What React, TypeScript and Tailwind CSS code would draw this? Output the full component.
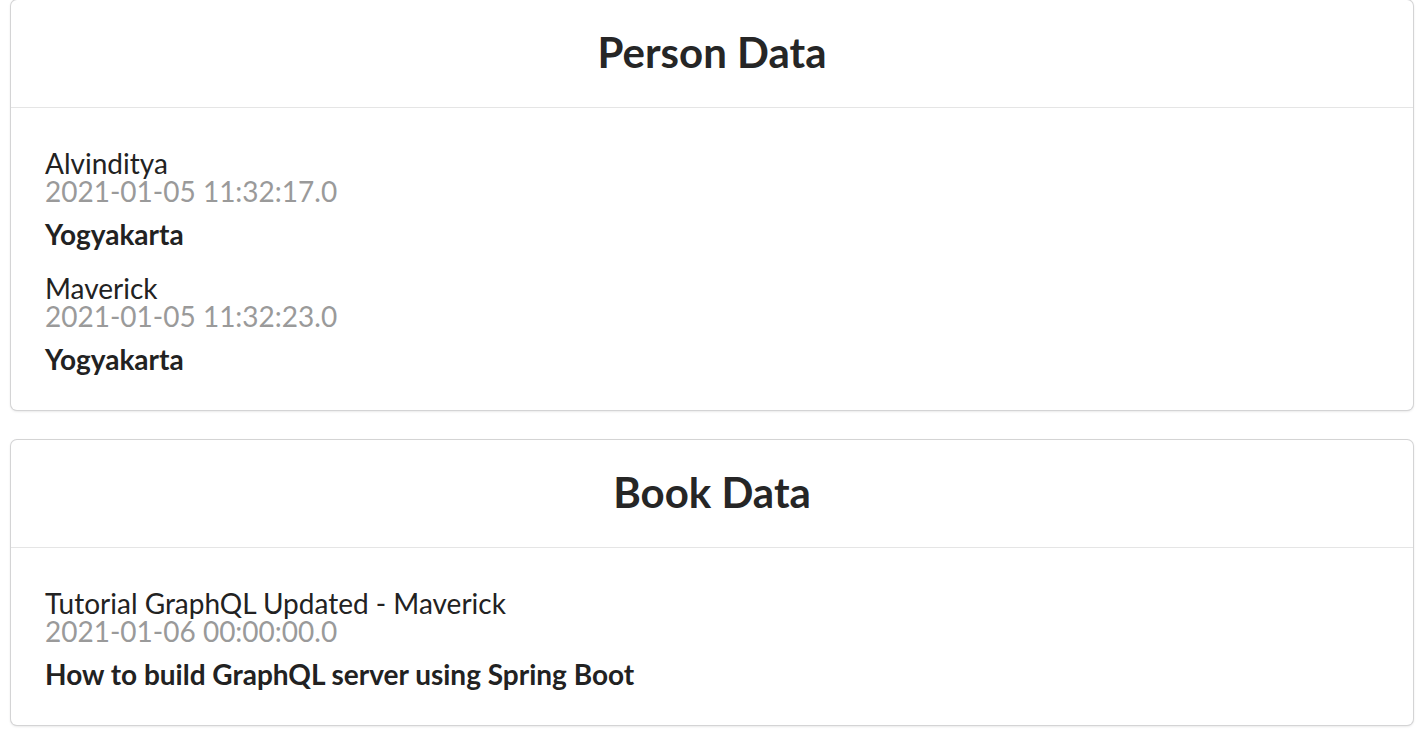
const people = [
  { name: "Alvinditya", date: "2021-01-05 11:32:17.0", city: "Yogyakarta" },
  { name: "Maverick", date: "2021-01-05 11:32:23.0", city: "Yogyakarta" },
];

const books = [
  {
    title: "Tutorial GraphQL Updated - Maverick",
    date: "2021-01-06 00:00:00.0",
    desc: "How to build GraphQL server using Spring Boot",
  },
];

function Item({ top, meta, bottom }: { top: string; meta: string; bottom: string }) {
  return (
    <div className="flex flex-col">
      <div className="text-[28px] leading-[28px] text-[#222]">{top}</div>
      <div className="text-[28px] leading-[28px] text-[#9a9a9a]">{meta}</div>
      <div className="mt-[15px] text-[28px] leading-[28px] font-bold text-[#222]">{bottom}</div>
    </div>
  );
}

function Card({ title, children }: { title: string; children: React.ReactNode }) {
  return (
    <div className="w-full rounded-[6px] bg-white shadow-[0_1px_3px_0_#d4d4d5,0_0_0_1px_#d4d4d5]">
      <div className="h-[108px] flex items-center justify-center border-b border-[#e5e5e5] pb-[4px]">
        <h2 className="text-[42px] leading-none font-bold text-[#262626]">{title}</h2>
      </div>
      <div className="flex flex-col gap-[26px] px-[34px] pt-[41px] pb-[37px]">{children}</div>
    </div>
  );
}

export default function App() {
  return (
    <div className="min-h-screen bg-white px-[11px] flex flex-col gap-[30px]" style={{ fontFamily: "Lato, 'Noto Sans', sans-serif" }}>
      <Card title="Person Data">
        {people.map((p) => (
          <Item key={p.name} top={p.name} meta={p.date} bottom={p.city} />
        ))}
      </Card>
      <Card title="Book Data">
        {books.map((b) => (
          <Item key={b.title} top={b.title} meta={b.date} bottom={b.desc} />
        ))}
      </Card>
    </div>
  );
}
